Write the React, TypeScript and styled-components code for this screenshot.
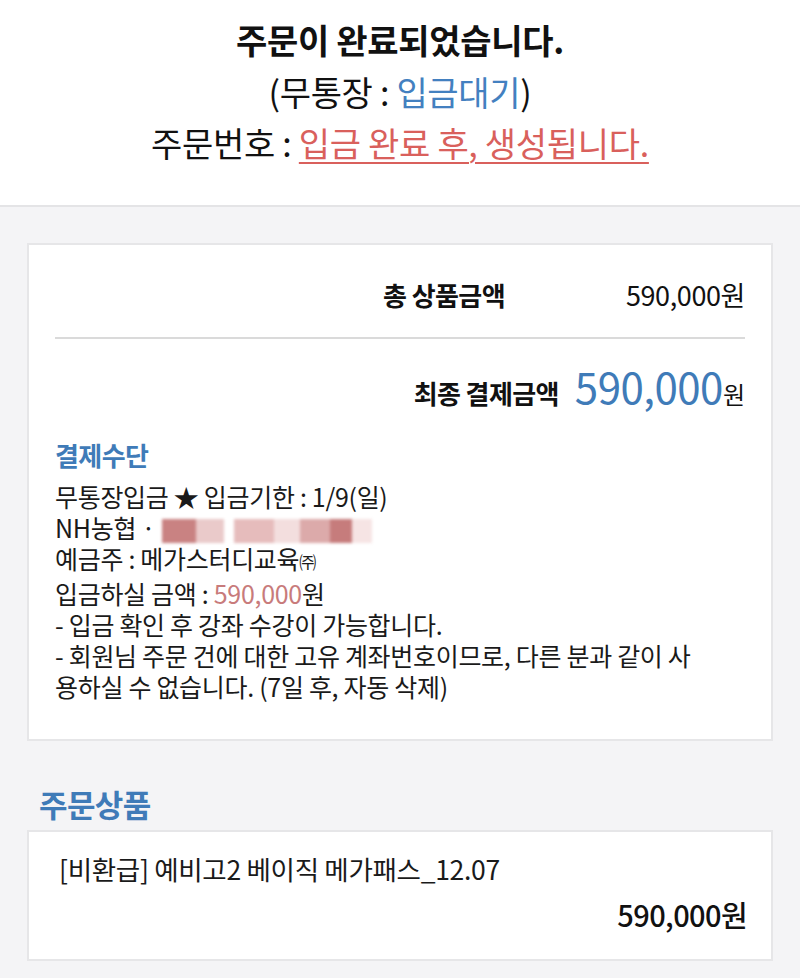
import React from 'react';
import styled, { createGlobalStyle } from 'styled-components';

const GlobalStyle = createGlobalStyle`
  html, body {
    margin: 0;
    padding: 0;
    background: #f4f4f6;
  }
  body {
    font-family: 'Noto Sans CJK KR', 'Noto Sans', sans-serif;
    color: #111;
  }
`;

const Header = styled.header`
  background: #fff;
  border-bottom: 2px solid #e4e4e6;
  height: 207px;
  padding-top: 14px;
  box-sizing: border-box;
  display: flex;
  flex-direction: column;
  align-items: center;
`;

const HeaderLine = styled.div<{ $bold?: boolean }>`
  font-size: 34px;
  line-height: 51.5px;
  font-weight: ${(p) => (p.$bold ? 700 : 400)};
  letter-spacing: -0.3px;
  color: #111;
`;

const Blue = styled.span`
  color: #4380c0;
`;

const RedLink = styled.a`
  color: #d9605c;
  text-decoration: underline;
  text-underline-offset: 5px;
  text-decoration-thickness: 2px;
`;

const Main = styled.main`
  padding: 36px 27px 20px;
`;

const Card = styled.section`
  background: #fff;
  border: 2px solid #e6e6e8;
  padding: 26px 26px 37px;
`;

const SummaryRow = styled.div<{ $big?: boolean }>`
  display: flex;
  justify-content: flex-end;
  align-items: baseline;
  gap: ${(p) => (p.$big ? '16px' : '0')};
  height: ${(p) => (p.$big ? '64px' : '48px')};
  line-height: ${(p) => (p.$big ? '64px' : '48px')};
`;

const SummaryLabel = styled.span`
  font-size: 26px;
  font-weight: 700;
  letter-spacing: -0.6px;
`;

const SummaryValue = styled.span`
  min-width: 240px;
  text-align: right;
  font-size: 27px;
  letter-spacing: -0.4px;
`;

const BigValue = styled.span`
  font-size: 42px;
  color: #3f7bb8;
  letter-spacing: -0.5px;
`;

const Won = styled.span`
  font-size: 24px;
`;

const Divider = styled.hr`
  border: none;
  border-top: 2px solid #dadada;
  margin: 18px 0 15px;
`;

const SectionTitle = styled.h3`
  margin: 19px 0 0;
  font-size: 26px;
  line-height: 36px;
  font-weight: 700;
  color: #3f7bb8;
  letter-spacing: -0.6px;
`;

const PayInfo = styled.div`
  margin-top: 8px;
  font-size: 25px;
  letter-spacing: -0.3px;
  color: #1a1a1a;
`;

const InfoLine = styled.div`
  line-height: 31.2px;
`;

const Pink = styled.span`
  color: #c87b7b;
`;

const Redacted = styled.span`
  display: inline-block;
  vertical-align: middle;
  width: 210px;
  height: 24px;
  margin-left: 2px;
  filter: blur(1.5px);
  background: linear-gradient(
    to right,
    #c98282 0 34px,
    #eacaca 34px 62px,
    #fff 62px 72px,
    #e6bcbc 72px 112px,
    #f3dede 112px 138px,
    #dcaaaa 138px 168px,
    #c67c7c 168px 190px,
    #f6e4e4 190px 210px
  );
`;

const Small = styled.span`
  font-size: 17px;
`;

const ProductsTitle = styled.h2`
  margin: 41px 0 4px 12px;
  font-size: 31px;
  line-height: 44px;
  font-weight: 700;
  color: #3f7bb8;
  letter-spacing: -0.6px;
`;

const ProductCard = styled.section`
  background: #fff;
  border: 2px solid #e6e6e8;
  padding: 20px 26px 17px 30px;
`;

const ProductName = styled.div`
  font-size: 26.5px;
  line-height: 34px;
  letter-spacing: -0.3px;
  color: #1a1a1a;
`;

const ProductPrice = styled.div`
  text-align: right;
  font-size: 29px;
  line-height: 56px;
  font-weight: 500;
  letter-spacing: -0.6px;
  margin-right: -2px;
`;

export default function App() {
  return (
    <>
      <GlobalStyle />
      <Header>
        <HeaderLine $bold>주문이 완료되었습니다.</HeaderLine>
        <HeaderLine>
          (무통장 : <Blue>입금대기</Blue>)
        </HeaderLine>
        <HeaderLine>
          주문번호 : <RedLink>입금 완료 후, 생성됩니다.</RedLink>
        </HeaderLine>
      </Header>
      <Main>
        <Card>
          <SummaryRow>
            <SummaryLabel>총 상품금액</SummaryLabel>
            <SummaryValue>590,000원</SummaryValue>
          </SummaryRow>
          <Divider />
          <SummaryRow $big>
            <SummaryLabel>최종 결제금액</SummaryLabel>
            <span>
              <BigValue>590,000</BigValue>
              <Won>원</Won>
            </span>
          </SummaryRow>
          <SectionTitle>결제수단</SectionTitle>
          <PayInfo>
            <InfoLine>무통장입금 ★ 입금기한 : 1/9(일)</InfoLine>
            <InfoLine>
              NH농협 · <Redacted />
            </InfoLine>
            <InfoLine>
              예금주 : 메가스터디교육<Small>㈜</Small>
            </InfoLine>
            <InfoLine>
              입금하실 금액 : <Pink>590,000</Pink>원
            </InfoLine>
            <InfoLine>- 입금 확인 후 강좌 수강이 가능합니다.</InfoLine>
            <InfoLine>
              - 회원님 주문 건에 대한 고유 계좌번호이므로, 다른 분과 같이 사
              <br />
              용하실 수 없습니다. (7일 후, 자동 삭제)
            </InfoLine>
          </PayInfo>
        </Card>
        <ProductsTitle>주문상품</ProductsTitle>
        <ProductCard>
          <ProductName>[비환급] 예비고2 베이직 메가패스_12.07</ProductName>
          <ProductPrice>590,000원</ProductPrice>
        </ProductCard>
      </Main>
    </>
  );
}
